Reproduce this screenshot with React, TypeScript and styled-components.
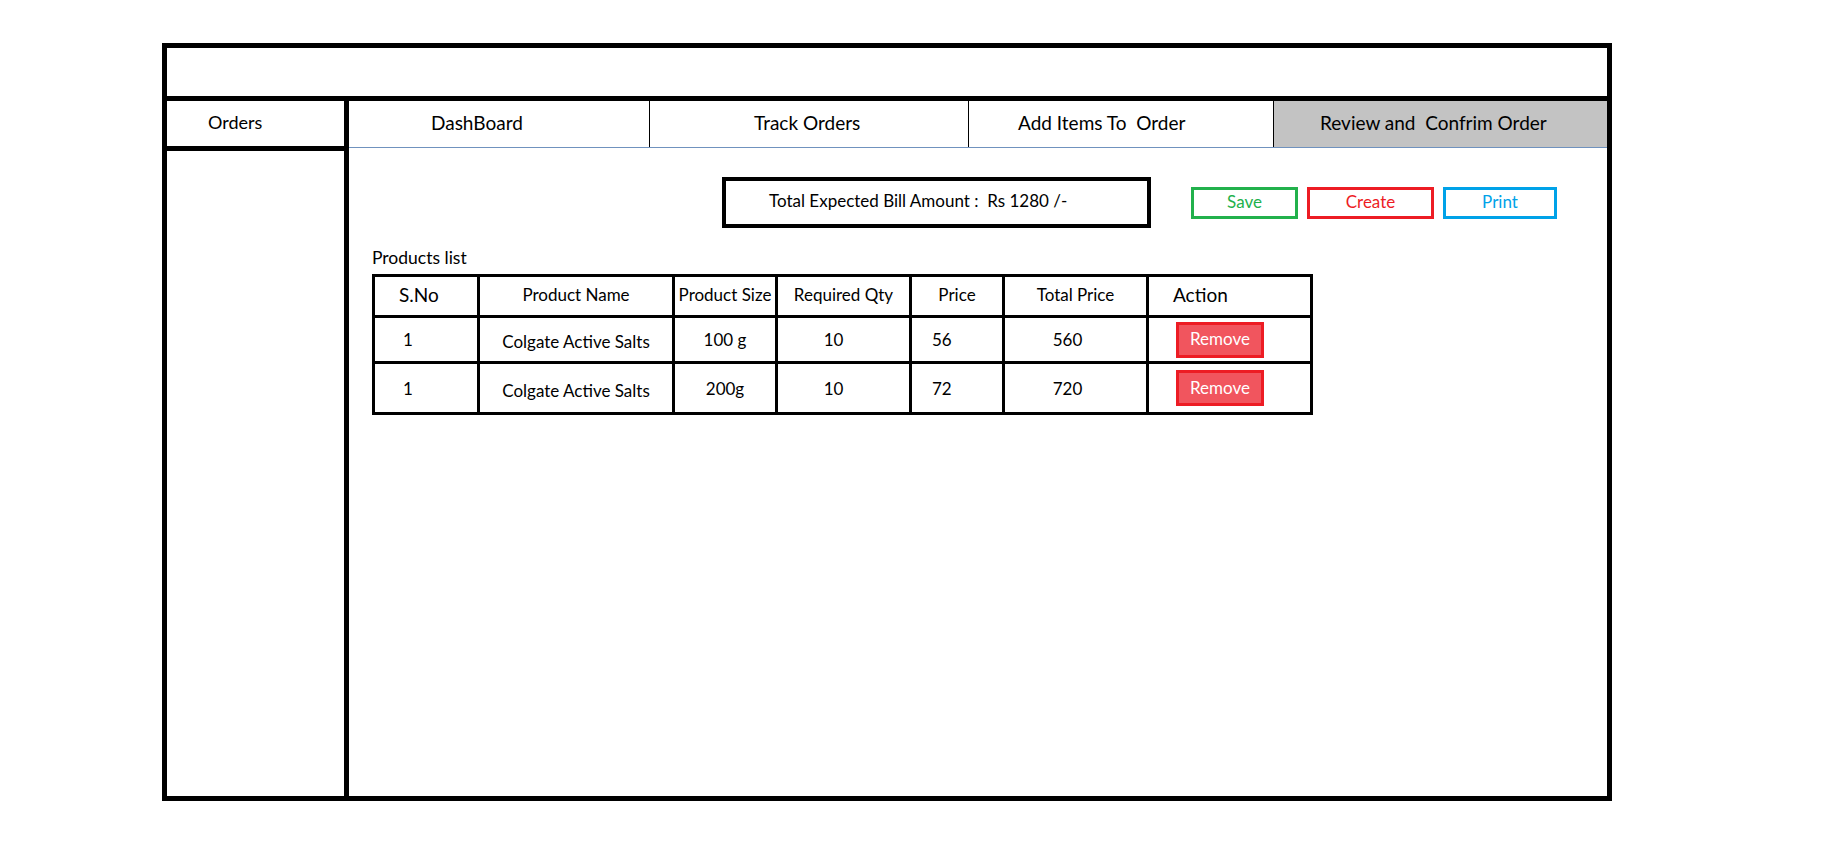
import * as React from "react";
import styled, { createGlobalStyle } from "styled-components";

type Align = "left" | "center";

const columns: { title: string; width: number; align: Align; pad: number; big?: boolean }[] = [
  { title: "S.No", width: 105, align: "left", pad: 24, big: true },
  { title: "Product Name", width: 195, align: "center", pad: 0 },
  { title: "Product Size", width: 103, align: "center", pad: 0 },
  { title: "Required Qty", width: 134, align: "center", pad: 0 },
  { title: "Price", width: 93, align: "center", pad: 0 },
  { title: "Total Price", width: 144, align: "center", pad: 0 },
  { title: "Action", width: 164, align: "left", pad: 24, big: true },
];

const products = [
  { sno: 1, name: "Colgate Active Salts", size: "100 g", qty: 10, price: 56, total: 560 },
  { sno: 1, name: "Colgate Active Salts", size: "200g", qty: 10, price: 72, total: 720 },
];

const tabs = [
  { label: "DashBoard", width: 301, pad: 82 },
  { label: "Track Orders", width: 319, pad: 104 },
  { label: "Add Items To  Order", width: 305, pad: 49 },
  { label: "Review and  Confrim Order", pad: 46, active: true },
];

export default function App() {
  return (
    <>
      <GlobalStyle />
      <Frame>
        <TopBar />
        <Body>
          <Sidebar>
            <SideHead>Orders</SideHead>
          </Sidebar>
          <Main>
            <Tabs>
              {tabs.map((t) => (
                <Tab key={t.label} $w={t.width} $pad={t.pad} $active={t.active}>
                  {t.label}
                </Tab>
              ))}
            </Tabs>
            <Content>
              <TopRow>
                <BillBox>Total Expected Bill Amount :  Rs 1280 /-</BillBox>
                <Actions>
                  <OutlineButton $color="#22b14c" $w={107}>Save</OutlineButton>
                  <OutlineButton $color="#ed1c24" $w={127}>Create</OutlineButton>
                  <OutlineButton $color="#00a2e8" $w={114}>Print</OutlineButton>
                </Actions>
              </TopRow>
              <ListTitle>Products list</ListTitle>
              <Grid $cols={columns.map((c) => `${c.width}px`).join(" ")}>
                {columns.map((c) => (
                  <HeadCell key={c.title} $align={c.align} $pad={c.pad} $big={c.big}>
                    {c.title}
                  </HeadCell>
                ))}
                {products.map((p, i) => (
                  <React.Fragment key={i}>
                    <Cell $align="left" $pad={28}>{p.sno}</Cell>
                    <Cell $align="center" $pad={0} $shift={4}>{p.name}</Cell>
                    <Cell $align="center" $pad={0}>{p.size}</Cell>
                    <Cell $align="center" $pad={0} $nudge={-10}>{p.qty}</Cell>
                    <Cell $align="left" $pad={20}>{p.price}</Cell>
                    <Cell $align="center" $pad={0} $nudge={-8}>{p.total}</Cell>
                    <Cell $align="left" $pad={27}>
                      <RemoveButton>Remove</RemoveButton>
                    </Cell>
                  </React.Fragment>
                ))}
              </Grid>
            </Content>
          </Main>
        </Body>
      </Frame>
    </>
  );
}

const GlobalStyle = createGlobalStyle`
  body {
    margin: 0;
    background: #ffffff;
    color: #000000;
    font-family: Lato, "Liberation Sans", sans-serif;
  }
`;

const Frame = styled.div`
  box-sizing: border-box;
  width: 1450px;
  height: 758px;
  margin: 43px 0 0 162px;
  border: 5px solid #000;
  display: flex;
  flex-direction: column;
`;

const TopBar = styled.header`
  flex-shrink: 0;
  height: 48px;
  border-bottom: 5px solid #000;
`;

const Body = styled.div`
  flex: 1;
  display: flex;
  min-height: 0;
`;

const Sidebar = styled.aside`
  flex-shrink: 0;
  width: 177px;
  border-right: 5px solid #000;
`;

const SideHead = styled.div`
  box-sizing: border-box;
  height: 50px;
  border-bottom: 5px solid #000;
  display: flex;
  align-items: center;
  padding: 0 0 3px 41px;
  font-size: 18px;
`;

const Main = styled.main`
  flex: 1;
  display: flex;
  flex-direction: column;
`;

const Tabs = styled.nav`
  display: flex;
  height: 47px;
  box-sizing: border-box;
  border-bottom: 1px solid #7092be;
`;

const Tab = styled.div<{ $w?: number; $pad: number; $active?: boolean }>`
  box-sizing: border-box;
  flex: ${(p) => (p.$w ? `0 0 ${p.$w}px` : "1")};
  display: flex;
  align-items: center;
  padding: 0 0 4px ${(p) => p.$pad}px;
  font-size: 19px;
  white-space: pre;
  background: ${(p) => (p.$active ? "#c3c3c3" : "transparent")};
  border-right: ${(p) => (p.$active ? "none" : "1px solid #000")};
`;

const Content = styled.section`
  padding: 29px 0 0 23px;
`;

const TopRow = styled.div`
  display: flex;
  align-items: center;
  margin-left: 350px;
`;

const BillBox = styled.div`
  box-sizing: border-box;
  width: 429px;
  height: 51px;
  border: 4px solid #000;
  display: flex;
  align-items: center;
  padding: 0 0 4px 43px;
  font-size: 17px;
  white-space: pre;
`;

const Actions = styled.div`
  display: flex;
  gap: 9px;
  margin-left: 40px;
`;

const OutlineButton = styled.button<{ $color: string; $w: number }>`
  box-sizing: border-box;
  width: ${(p) => p.$w}px;
  height: 32px;
  border: 3px solid ${(p) => p.$color};
  background: #fff;
  color: ${(p) => p.$color};
  font-family: inherit;
  font-size: 17px;
  padding: 0 0 2px;
`;

const ListTitle = styled.div`
  margin: 19px 0 5px;
  font-size: 17.5px;
  line-height: 22px;
`;

const Grid = styled.div<{ $cols: string }>`
  display: grid;
  grid-template-columns: ${(p) => p.$cols};
  grid-template-rows: 41px 46px 51px;
  width: fit-content;
  border-top: 3px solid #000;
  border-left: 3px solid #000;
`;

const Cell = styled.div<{ $align: Align; $pad: number; $shift?: number; $nudge?: number }>`
  box-sizing: border-box;
  display: flex;
  align-items: center;
  justify-content: ${(p) => (p.$align === "center" ? "center" : "flex-start")};
  padding-left: ${(p) => p.$pad}px;
  padding-top: ${(p) => p.$shift ?? 0}px;
  ${(p) => (p.$nudge ? `padding-right: ${-p.$nudge * 2}px;` : "")}
  border-right: 3px solid #000;
  border-bottom: 3px solid #000;
  font-size: 17px;
  white-space: nowrap;
`;

const HeadCell = styled(Cell)<{ $big?: boolean }>`
  font-size: ${(p) => (p.$big ? "19px" : "17px")};
  padding-bottom: 3px;
`;

const RemoveButton = styled.button`
  box-sizing: border-box;
  width: 88px;
  height: 36px;
  border: 3px solid #ed1c24;
  background: #f1555e;
  color: #fff;
  font-family: inherit;
  font-size: 17px;
  padding: 0 0 2px;
`;
